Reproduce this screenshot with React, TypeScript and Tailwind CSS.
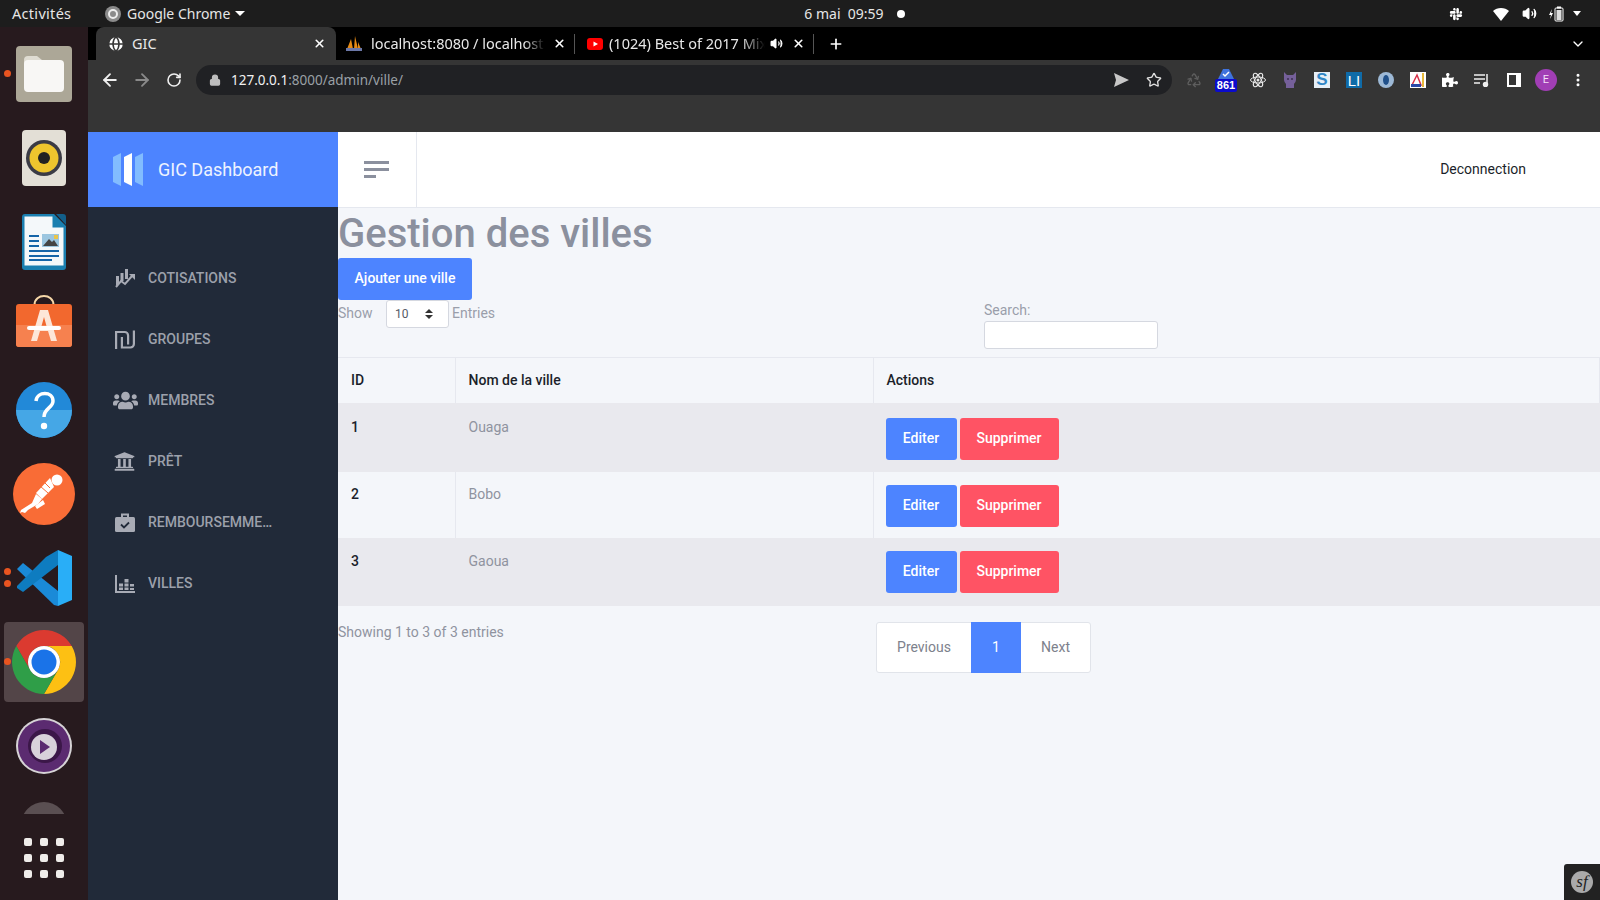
import React from "react";
import { FaUsers, FaUniversity, FaPuzzlePiece, FaSlack } from "react-icons/fa";
import { ArrowLeft, ArrowRight, RotateCw, Lock, Star, X, Plus, ChevronDown, Recycle, MoreVertical, Globe, Volume2 } from "lucide-react";

const Dot = ({ className }: { className: string }) => (
  <span className={`absolute left-[4px] w-[7px] h-[7px] rounded-full bg-[#e95420] ${className}`} />
);

function FilesIcon() {
  return (
    <svg width="56" height="56" viewBox="0 0 56 56">
      <rect width="56" height="56" rx="4" fill="#aca797" />
      <path d="M8 14a4 4 0 0 1 4-4h9l5 4v10H8z" fill="#dfdcd2" />
      <rect x="8" y="14" width="40" height="32" rx="4" fill="#f8f7f5" />
    </svg>
  );
}
function RhythmIcon() {
  return (
    <svg width="44" height="56" viewBox="0 0 44 56">
      <rect width="44" height="56" rx="4" fill="#e3dfd6" />
      <circle cx="22" cy="28" r="18" fill="#3b3b45" />
      <circle cx="22" cy="28" r="14.5" fill="#eec52e" />
      <circle cx="22" cy="28" r="6" fill="#222" />
    </svg>
  );
}
function WriterIcon() {
  return (
    <svg width="44" height="56" viewBox="0 0 44 56">
      <path d="M3 0h29l12 12v41a3 3 0 0 1-3 3H3a3 3 0 0 1-3-3V3a3 3 0 0 1 3-3z" fill="#1a7fb0" />
      <path d="M2.500 2.500h28v11h11v38h-39z" fill="#f4f8fa" />
      <path d="M34 0h7a3 3 0 0 1 3 3v8z" fill="#135f8a" />
      <rect x="7" y="21" width="10" height="2" fill="#1565a8" />
      <rect x="7" y="26" width="10" height="2" fill="#1565a8" />
      <rect x="7" y="31" width="10" height="2" fill="#1565a8" />
      <rect x="7" y="36" width="30" height="2" fill="#1565a8" />
      <rect x="7" y="41" width="30" height="2" fill="#1565a8" />
      <rect x="7" y="45" width="23" height="2" fill="#1565a8" />
      <rect x="20" y="20" width="17" height="13" fill="#9bc6e0" />
      <path d="M21 32l6-7 3 3 2-2 4 6z" fill="#444" />
      <rect x="32" y="21" width="4" height="4" fill="#e9c54b" />
    </svg>
  );
}
function StoreIcon() {
  return (
    <svg width="56" height="52" viewBox="0 0 56 52">
      <path d="M18.500 10c0-12 19-12 19 0" fill="none" stroke="#f6d7a8" strokeWidth="2" />
      <rect y="9" width="56" height="43" rx="3" fill="#f2682e" />
      <path d="M0 30h56v19a3 3 0 0 1-3 3H3a3 3 0 0 1-3-3z" fill="#f6814f" />
      <path d="M24 15h8l9 31h-6l-3-10h-8l-3 10h-6zM25.500 31h5l-2.500-9z" fill="#fde6d8" />
      <rect x="11" y="31" width="34" height="4" rx="2" fill="#fff" />
    </svg>
  );
}
function HelpIcon() {
  return (
    <svg width="56" height="56" viewBox="0 0 56 56">
      <circle cx="28" cy="28" r="28" fill="#2289d8" />
      <path d="M0 28a28 28 0 0 0 56 0z" fill="#45a7e6" />
      <path d="M20 19c1-10 17-10 17 0 0 7-9 7-9 16" fill="none" stroke="#fff" strokeWidth="3.500" />
      <circle cx="28" cy="44" r="3.200" fill="#fff" />
    </svg>
  );
}
function PostmanIcon() {
  return (
    <svg width="62" height="62" viewBox="0 0 62 62">
      <circle cx="31" cy="31" r="31" fill="#f96c36" />
      <g fill="#fff">
        <circle cx="44" cy="17" r="5.500" />
        <path d="M37 15l4 9-12 12-6-6z" />
        <path d="M23 31l6 5-4 5-10 6-3 3-3-1-2 1 1-3 11-7z" />
        <path d="M30 37l2 4-8 5-2-3z" />
      </g>
      <path d="M27 23l8 7M31 19l6 6" stroke="#f96c36" strokeWidth="1" />
    </svg>
  );
}
function CodeIcon() {
  return (
    <svg width="56" height="58" viewBox="0 0 56 58">
      <path d="M1 20L7 14l35 28v15l-4-1z" fill="#1a8ad8" />
      <path d="M42 1v15L7 43 1 39v-2L30 8z" fill="#0e7cc0" />
      <path d="M42 1l14 6v44l-14 6z" fill="#29aef7" />
    </svg>
  );
}
function ChromeIcon() {
  return (
    <svg width="64" height="64" viewBox="0 0 64 64">
      <path d="M32 0A32 32 0 0 1 59.700 16L32 16A16 16 0 0 0 18.100 40L4.300 16A32 32 0 0 1 32 0Z" fill="#db3a30" />
      <path d="M59.700 16A32 32 0 0 1 32 64L45.900 40A16 16 0 0 0 32 16Z" fill="#fdc013" />
      <path d="M4.300 16A32 32 0 0 0 32 64L45.900 40A16 16 0 0 1 18.100 40Z" fill="#2f9e48" />
      <circle cx="32" cy="32" r="16" fill="#fff" />
      <circle cx="32" cy="32" r="12.500" fill="#1a73e8" />
    </svg>
  );
}
function MpvIcon() {
  return (
    <svg width="56" height="56" viewBox="0 0 56 56">
      <circle cx="28" cy="28" r="28" fill="#d6d3d6" />
      <circle cx="28" cy="28" r="26" fill="#5b2b70" />
      <circle cx="29" cy="28" r="17" fill="#3b1748" />
      <circle cx="28" cy="29" r="13" fill="#d8d2da" />
      <path d="M24 22l10 7-10 7z" fill="#5b2b70" />
    </svg>
  );
}

function Dock() {
  return (
    <div className="w-[88px] shrink-0 bg-[#271a1e] flex flex-col items-center relative overflow-hidden">
      <div className="mt-[19px] h-[56px] w-full flex justify-center relative">
        <Dot className="top-[24px]" />
        <FilesIcon />
      </div>
      <div className="mt-[28px] h-[56px] w-full flex justify-center">
        <RhythmIcon />
      </div>
      <div className="mt-[28px] h-[56px] w-full flex justify-center">
        <WriterIcon />
      </div>
      <div className="mt-[25px] h-[52px] w-full flex justify-center">
        <StoreIcon />
      </div>
      <div className="mt-[35px] h-[56px] w-full flex justify-center">
        <HelpIcon />
      </div>
      <div className="mt-[25px] h-[62px] w-full flex justify-center">
        <PostmanIcon />
      </div>
      <div className="mt-[24px] h-[58px] w-full flex justify-center relative">
        <Dot className="top-[19px]" />
        <Dot className="top-[31px]" />
        <CodeIcon />
      </div>
      <div className="mt-[15px] h-[80px] w-full flex justify-center relative">
        <div className="w-[80px] h-[80px] rounded bg-[#534548] flex items-center justify-center relative">
          <ChromeIcon />
        </div>
        <Dot className="top-[36px]" />
      </div>
      <div className="mt-[16px] h-[56px] w-full flex justify-center">
        <MpvIcon />
      </div>
      <div className="mt-[28px] h-[12px] w-[46px] overflow-hidden">
        <div className="w-[46px] h-[46px] rounded-full bg-[#5a4f52]" />
      </div>
      <div className="mt-[24px] grid grid-cols-3 gap-x-[8px] gap-y-[8px]">
        {[1, 2, 3, 4, 5, 6, 7, 8, 9].map((i) => (
          <span key={i} className="w-[8px] h-[8px] rounded-[2px] bg-[#efecea]" />
        ))}
      </div>
    </div>
  );
}

function TopBar() {
  return (
    <div className="h-[27px] shrink-0 bg-[#1d1d1d] flex items-center text-[14px] text-[#e6e6e6] font-['Noto_Sans',sans-serif] relative">
      <span className="ml-[12px] w-[93px] text-[14.5px] tracking-[0.3px]">Activités</span>
      <svg width="16" height="16" viewBox="0 0 16 16" className="mr-[6px]">
        <circle cx="8" cy="8" r="8" fill="#8b8b8b" />
        <circle cx="8" cy="8" r="4" fill="none" stroke="#eee" strokeWidth="2" />
      </svg>
      <span>Google Chrome</span>
      <span className="ml-[5px] w-0 h-0 border-x-[5px] border-x-transparent border-t-[5px] border-t-white" />
      <span className="ml-[559px] text-[14px]">6 mai&nbsp; 09:59</span>
      <span className="ml-[13px] w-[8px] h-[8px] rounded-full bg-white" />
      <FaSlack className="ml-[544px] text-white" size={14} />
      <svg width="16" height="14" viewBox="0 0 16 14" className="ml-[30px]">
        <path d="M0 4C4 0 12 0 16 4L8 14z" fill="#fff" />
      </svg>
      <Volume2 size={15} className="ml-[13px] text-white" fill="white" />
      <svg width="16" height="16" viewBox="0 0 16 16" className="ml-[12px]">
        <path d="M3 3L0 9h2l-1 4 3-6H2z" fill="#fff" />
        <rect x="6" y="2" width="8" height="13" rx="1" fill="none" stroke="#fff" />
        <rect x="7.500" y="4" width="5" height="10" fill="#ddd" />
        <rect x="8" y="0.500" width="4" height="2" fill="#fff" />
      </svg>
      <span className="ml-[8px] w-0 h-0 border-x-[4.500px] border-x-transparent border-t-[5px] border-t-white" />
    </div>
  );
}

function TabStrip() {
  return (
    <div className="h-[33px] shrink-0 bg-black flex items-end text-[14.5px] font-['Noto_Sans',sans-serif] pl-[8px]">
      <div className="w-[240px] h-[33px] bg-[#353535] rounded-t-[8px] flex items-center pl-[11px] pr-[10px] text-[#e8e8e8]">
        <Globe size={18} className="mr-[7px] text-[#353535]" fill="#fff" />
        <span className="flex-1">GIC</span>
        <X size={13} strokeWidth={3} className="text-white" />
      </div>
      <div className="w-[238px] h-[33px] flex items-center pl-[10px] pr-[8px] text-[#e8e8e8] relative">
        <svg width="16" height="16" viewBox="0 0 16 16" className="mr-[9px] shrink-0">
          <path d="M1 13L5 3l2 10zM8 13l1-13 3 13zM12 13l0-7 3 7z" fill="#e58a14" />
          <rect x="0" y="12" width="16" height="3" fill="#6c78a8" />
        </svg>
        <span className="flex-1 whitespace-nowrap overflow-hidden [mask-image:linear-gradient(to_right,black_88%,transparent)]">localhost:8080 / localhost</span>
        <X size={13} strokeWidth={3} className="text-white ml-[8px] shrink-0" />
      </div>
      <div className="w-[1px] h-[20px] bg-[#555] mb-[6px]" />
      <div className="w-[239px] h-[33px] flex items-center pl-[12px] text-[#e8e8e8]">
        <svg width="16" height="12" viewBox="0 0 16 12" className="mr-[6px] shrink-0">
          <rect width="16" height="12" rx="3" fill="#ff0000" />
          <path d="M6.500 3.500L11 6l-4.500 2.500z" fill="#fff" />
        </svg>
        <span className="w-[156px] whitespace-nowrap overflow-hidden [mask-image:linear-gradient(to_right,black_85%,transparent)]">(1024) Best of 2017 Mix</span>
        <Volume2 size={13} className="ml-[5px] text-white" fill="white" />
        <X size={13} strokeWidth={3} className="text-white ml-[9px] shrink-0" />
      </div>
      <div className="w-[1px] h-[20px] bg-[#555] mb-[6px] -ml-[1px]" />
      <div className="h-[33px] flex items-center ml-[14px]">
        <Plus size={16} strokeWidth={2.500} className="text-white" />
      </div>
      <div className="flex-1" />
      <div className="h-[33px] flex items-center pr-[14px]">
        <ChevronDown size={16} strokeWidth={2} className="text-white" />
      </div>
    </div>
  );
}

function Ext({ children }: { children: React.ReactNode }) {
  return <div className="w-[32px] flex items-center justify-center">{children}</div>;
}

function Toolbar() {
  return (
    <div className="h-[72px] shrink-0 bg-[#353535] pt-[5px]">
      <div className="flex items-start h-[30px]">
        <div className="w-[108px] h-[30px] flex items-center pl-[12px]">
          <ArrowLeft size={20} strokeWidth={2.200} className="text-[#f0f0f0]" />
          <ArrowRight size={20} strokeWidth={2.200} className="text-[#8a8a8a] ml-[12px]" />
          <RotateCw size={16} strokeWidth={2.400} className="text-[#f0f0f0] ml-[14px]" />
        </div>
        <div className="w-[976px] h-[30px] rounded-full bg-[#202124] flex items-center pl-[13px] pr-[10px] font-['Noto_Sans',sans-serif] text-[13.5px]">
          <Lock size={12} strokeWidth={2.500} className="text-[#bdbdbd] mr-[10px]" fill="#bdbdbd" />
          <span className="text-[#f1f1f1]">127.0.0.1</span>
          <span className="text-[#9aa0a6]">:8000/admin/ville/</span>
          <div className="flex-1" />
          <svg width="15" height="14" viewBox="0 0 15 14" className="mr-[17px]">
            <path d="M0 0l15 7-15 7 2-7z" fill="#c7c7c7" />
          </svg>
          <Star size={16} strokeWidth={2} className="text-[#e0e0e0]" />
        </div>
        <div className="flex h-[30px] ml-[6px]">
          <Ext><Recycle size={16} className="text-[#5e5e5e]" /></Ext>
          <Ext>
            <div className="relative w-[22px] h-[26px] flex justify-center">
              <svg width="16" height="12" viewBox="0 0 16 12" className="mt-[1px]">
                <path d="M0 11L5 1h6l5 10z" fill="#3f73dd" />
                <path d="M5 6l2 2 4-4" stroke="#fff" fill="none" strokeWidth="1.500" />
              </svg>
              <span className="absolute left-0 top-[12px] w-[22px] h-[13px] bg-[#0b0bcc] rounded-[2px] text-[11px] leading-[13px] font-bold text-white text-center font-['Liberation_Sans',sans-serif]">861</span>
            </div>
          </Ext>
          <Ext>
            <svg width="16" height="16" viewBox="0 0 16 16" fill="none" stroke="#e8e8e8" strokeWidth="1">
              <ellipse cx="8" cy="8" rx="7.500" ry="3" />
              <ellipse cx="8" cy="8" rx="7.500" ry="3" transform="rotate(60 8 8)" />
              <ellipse cx="8" cy="8" rx="7.500" ry="3" transform="rotate(120 8 8)" />
              <circle cx="8" cy="8" r="1.500" fill="#e8e8e8" stroke="none" />
            </svg>
          </Ext>
          <Ext>
            <svg width="14" height="16" viewBox="0 0 14 16">
              <path d="M1 0l3 3h6l3-3v8a6 6 0 0 1-2 4v4H3v-4a6 6 0 0 1-2-4z" fill="#75609a" />
              <circle cx="5" cy="7" r="1" fill="#3d3050" />
              <circle cx="9" cy="7" r="1" fill="#3d3050" />
            </svg>
          </Ext>
          <Ext>
            <div className="w-[16px] h-[16px] bg-[#e6eff7] flex items-center justify-center text-[17px] leading-[16px] font-bold text-[#2f86c5] font-['Liberation_Sans',sans-serif]">S</div>
          </Ext>
          <Ext>
            <div className="w-[16px] h-[16px] bg-[#0f6ba8] flex items-center justify-center text-white text-[15px] leading-none font-['Liberation_Sans',sans-serif]">LI</div>
          </Ext>
          <Ext>
            <svg width="16" height="16" viewBox="0 0 16 16">
              <circle cx="8" cy="8" r="8" fill="#9db9d6" />
              <ellipse cx="8" cy="8" rx="3" ry="5" fill="#20508a" />
            </svg>
          </Ext>
          <Ext>
            <svg width="16" height="16" viewBox="0 0 16 16">
              <rect width="16" height="16" fill="#fff" />
              <path d="M2 13L7 3l4 10z" fill="none" stroke="#d8324a" strokeWidth="1.500" />
              <rect x="12" y="1" width="2" height="14" fill="#e7b93a" />
              <rect x="1" y="12" width="10" height="3" fill="#2a4aa8" />
            </svg>
          </Ext>
          <Ext><FaPuzzlePiece size={16} className="text-white" /></Ext>
          <Ext>
            <svg width="16" height="14" viewBox="0 0 16 14" fill="none" stroke="#f0f0f0" strokeWidth="1.500">
              <path d="M0 2h11M0 6h11M0 10h6M13 1v10" />
              <circle cx="11.500" cy="11.500" r="2" fill="#f0f0f0" />
            </svg>
          </Ext>
          <Ext>
            <div className="w-[14px] h-[14px] border-[2px] border-white bg-white flex justify-start">
              <div className="w-[7px] h-full bg-[#353535]" />
            </div>
          </Ext>
          <Ext>
            <div className="w-[22px] h-[22px] rounded-full bg-[#a13eb5] text-[11px] text-[#f3dff7] flex items-center justify-center font-['Roboto',sans-serif]">E</div>
          </Ext>
          <Ext><MoreVertical size={16} strokeWidth={2.500} className="text-white" /></Ext>
        </div>
      </div>
    </div>
  );
}

function CotisIcon() {
  return (
    <svg width="20" height="19" viewBox="0 0 20 19" fill="#a8abb5">
      <rect x="1" y="7" width="3" height="9" />
      <rect x="5.500" y="4" width="3" height="8" />
      <rect x="10" y="0" width="3" height="10" />
      <path d="M1 18l5-6 4 3 7-8" fill="none" stroke="#a8abb5" strokeWidth="2" />
      <path d="M14 5h6v6z" />
    </svg>
  );
}
function ShekelIcon() {
  return (
    <svg width="20" height="19" viewBox="0 0 20 19" fill="none" stroke="#a8abb5" strokeWidth="2.200">
      <path d="M1.100 19V2h8.500a3.500 3.500 0 0 1 3.500 3.500v9" />
      <path d="M18.900 0.500V14a3.500 3.500 0 0 1-3.500 3.500H6.900V7" />
    </svg>
  );
}
function CaseIcon() {
  return (
    <svg width="20" height="19" viewBox="0 0 20 19">
      <path d="M7 4V1.500h6V4" fill="none" stroke="#a8abb5" strokeWidth="2" />
      <rect y="4" width="20" height="15" rx="1.500" fill="#a8abb5" />
      <path d="M6 11.500l3 3 5-5" fill="none" stroke="#212a39" strokeWidth="1.800" />
    </svg>
  );
}
function VillesIcon() {
  return (
    <svg width="20" height="18" viewBox="0 0 20 18" fill="#a8abb5">
      <rect x="0" y="0" width="2" height="18" />
      <rect x="0" y="16" width="20" height="2" />
      <rect x="4" y="8.500" width="4" height="3" />
      <rect x="4" y="12.500" width="4" height="2.500" />
      <rect x="9.500" y="4" width="4" height="3.500" />
      <rect x="9.500" y="8.500" width="4" height="3" />
      <rect x="9.500" y="12.500" width="4" height="2.500" />
      <rect x="15" y="9" width="4" height="2.500" />
      <rect x="15" y="13" width="4" height="2" />
    </svg>
  );
}

const menu: { label: string; icon: React.ReactNode }[] = [
  { label: "COTISATIONS", icon: <CotisIcon /> },
  { label: "GROUPES", icon: <ShekelIcon /> },
  { label: "MEMBRES", icon: <FaUsers size={25} className="text-[#a8abb5] -ml-[2px]" /> },
  { label: "PRÊT", icon: <FaUniversity size={21} className="text-[#a8abb5] -ml-[1px]" /> },
  { label: "REMBOURSEMME…", icon: <CaseIcon /> },
  { label: "VILLES", icon: <VillesIcon /> },
];

function Sidebar() {
  return (
    <aside className="w-[250px] shrink-0 bg-[#212a39] flex flex-col">
      <div className="h-[75px] bg-[#4d84ff] flex items-center pl-[25px] gap-[15px]">
        <svg width="30" height="33" viewBox="0 0 30 33">
          <path d="M0 4L8 0v33L0 29z" fill="#82bcff" />
          <path d="M11 4l8-4v33l-8-4z" fill="#ffffff" />
          <path d="M22 4l8-4v33l-8-4z" fill="#82bcff" />
        </svg>
        <span className="text-[18px] text-[#eef3ff] font-['Roboto',sans-serif]">GIC Dashboard</span>
      </div>
      <nav className="pt-[41px]">
        {menu.map((m) => (
          <div key={m.label} className="h-[61px] flex items-center pl-[27px]">
            <span className="w-[33px] flex items-center">{m.icon}</span>
            <span className="text-[14px] font-medium text-[#9ca0ab] font-['Roboto',sans-serif]">{m.label}</span>
          </div>
        ))}
      </nav>
    </aside>
  );
}

const rows = [
  { id: "1", name: "Ouaga", h: "h-[69px]", bg: "bg-[#e9e9ee]", pt: "pt-[14px]", bt: "pt-[15px]", border: "border-r border-transparent" },
  { id: "2", name: "Bobo", h: "h-[66px]", bg: "", pt: "pt-[12px]", bt: "pt-[13px]", border: "border-r border-[#e6e8ef]" },
  { id: "3", name: "Gaoua", h: "h-[68px]", bg: "bg-[#e9e9ee]", pt: "pt-[13px]", bt: "pt-[13px]", border: "border-r border-transparent" },
];

function Content() {
  return (
    <main className="flex-1 min-w-0 flex flex-col bg-[#f4f6fa] font-['Roboto',sans-serif] relative overflow-hidden">
      <header className="h-[76px] shrink-0 bg-white border-b border-[#e5e8ef] flex items-center">
        <div className="w-[79px] h-full border-r border-[#e5e8ef] flex flex-col justify-center pl-[26px] gap-[4px] pb-[1px]">
          <span className="block w-[25px] h-[3px] bg-[#8b909e]" />
          <span className="block w-[25px] h-[3px] bg-[#8b909e]" />
          <span className="block w-[12px] h-[3px] bg-[#8b909e]" />
        </div>
        <div className="flex-1" />
        <span className="mr-[74px] text-[14px] text-[#1b1f2a]">Deconnection</span>
      </header>
      <h1 className="h-[50px] text-[40px] leading-[52px] font-medium text-[#8b909e]">Gestion des villes</h1>
      <div>
        <button className="w-[134px] h-[42px] pb-[2px] rounded-[3px] bg-[#4d84ff] text-white text-[14px] font-medium">Ajouter une ville</button>
      </div>
      <div className="h-[57px] flex text-[14px] text-[#9a9eaa]">
        <div className="w-[646px] flex items-start">
          <span className="w-[48px] pt-[3px]">Show</span>
          <div className="w-[63px] h-[28px] bg-white border border-[#d5d8e0] rounded-[3px] flex items-center pl-[8px] text-[12px] text-[#555a66]">
            <span className="w-[30px]">10</span>
            <svg width="8" height="12" viewBox="0 0 8 12" fill="#333">
              <path d="M4 1l4 4H0zM4 11l4-4H0z" />
            </svg>
          </div>
          <span className="ml-[3px] pt-[3px]">Entries</span>
        </div>
        <div className="flex flex-col">
          <span className="h-[21px]">Search:</span>
          <input className="w-[174px] h-[28px] bg-white border border-[#d5d8e0] rounded-[3px]" aria-label="Search" />
        </div>
      </div>
      <table className="w-full border-collapse table-fixed text-[14px]">
        <colgroup>
          <col className="w-[117px]" />
          <col className="w-[418px]" />
          <col />
        </colgroup>
        <thead>
          <tr className="h-[45px] border-t border-[#e6e8ef] text-left text-[#1b1f2a]">
            <th className="pl-[13px] font-medium border-r border-[#e6e8ef]">ID</th>
            <th className="pl-[13px] font-medium border-r border-[#e6e8ef]">Nom de la ville</th>
            <th className="pl-[13px] font-medium border-r border-[#e6e8ef]">Actions</th>
          </tr>
        </thead>
        <tbody>
          {rows.map((r) => (
            <tr key={r.id} className={`${r.h} ${r.bg}`}>
              <td className={`align-top pl-[13px] leading-[21px] font-medium text-[#1b1f2a] ${r.pt} ${r.border}`}>{r.id}</td>
              <td className={`align-top pl-[13px] leading-[21px] text-[#8f939f] ${r.pt} ${r.border}`}>{r.name}</td>
              <td className={`align-top pl-[12px] ${r.bt}`}>
                <div className="flex gap-[3px]">
                  <button className="w-[71px] h-[42px] rounded-[3px] bg-[#4d84ff] text-white font-medium">Editer</button>
                  <button className="w-[99px] h-[42px] rounded-[3px] bg-[#ff5364] text-white font-medium">Supprimer</button>
                </div>
              </td>
            </tr>
          ))}
        </tbody>
      </table>
      <div className="flex text-[14px] pt-[16px]">
        <div className="w-[538px] text-[#8f939f] leading-[21px]">Showing 1 to 3 of 3 entries</div>
        <div className="w-[215px] h-[51px] flex bg-white border border-[#e1e4ea] rounded-[3px] text-[#7d818c]">
          <span className="w-[94px] flex items-center justify-center">Previous</span>
          <span className="w-[50px] -my-[1px] flex items-center justify-center bg-[#4d84ff] text-white">1</span>
          <span className="flex-1 flex items-center justify-center">Next</span>
        </div>
      </div>
      <div className="absolute right-0 bottom-0 w-[36px] h-[36px] bg-[#222222] rounded-tl-[3px] flex items-center justify-center">
        <div className="w-[22px] h-[22px] rounded-full bg-[#aaaaaa] flex items-center justify-center text-[#222222] text-[17px] italic font-['Liberation_Serif',serif]">sf</div>
      </div>
    </main>
  );
}

export default function App() {
  return (
    <div className="w-[1600px] h-[900px] flex flex-col overflow-hidden">
      <TopBar />
      <div className="flex-1 min-h-0 flex">
        <Dock />
        <div className="flex-1 min-w-0 flex flex-col">
          <TabStrip />
          <Toolbar />
          <div className="flex-1 min-h-0 flex">
            <Sidebar />
            <Content />
          </div>
        </div>
      </div>
    </div>
  );
}
